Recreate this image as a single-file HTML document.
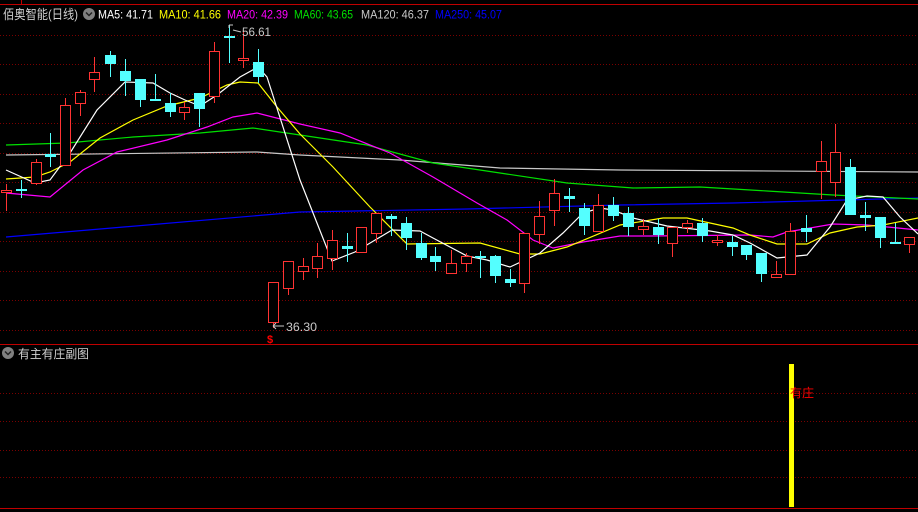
<!DOCTYPE html>
<html><head><meta charset="utf-8"><style>
html,body{margin:0;padding:0;background:#000;width:918px;height:512px;overflow:hidden}
svg{display:block;font-family:"Liberation Sans","Noto Sans CJK SC",sans-serif}
</style></head><body>
<svg id="s" width="918" height="512" viewBox="0 0 918 512" xmlns="http://www.w3.org/2000/svg">
<rect width="918" height="512" fill="#000"/>
<g id="grid" stroke="#7a0000" stroke-width="1" stroke-dasharray="1,2"></g>
<line x1="0" y1="4.5" x2="918" y2="4.5" stroke="#c00000"/>
<line x1="21.5" y1="0" x2="21.5" y2="4" stroke="#c00000"/>
<line x1="0" y1="344.5" x2="918" y2="344.5" stroke="#c00000"/>
<line x1="0" y1="508.5" x2="918" y2="508.5" stroke="#c00000"/>
<g fill="none" stroke-width="1.2">
<polyline stroke="#0000ff" points="6,237 300,212 467,209 620,205 733,203 918,198"/>
<polyline stroke="#c8c8c8" points="6,155 257,152 300,155 400,160 500,168 620,170 918,172"/>
<polyline stroke="#00e000" points="6,145 67,143 133,137 200,133 253,128 300,135 367,145 433,163 500,173 567,183 633,188 700,187 767,191 833,195 918,199"/>
<polyline stroke="#ff00ff" points="6,193 50,197 83,170 117,152 167,140 207,127 233,117 257,113 300,124 340,133 390,153 433,177 477,203 507,220 533,240 553,248 583,242 620,236 650,236 750,235 773,237 787,232 833,224 867,225 918,230"/>
<polyline stroke="#ffff00" points="6,179 35,177 50,172 70,162 100,138 133,120 167,106 200,98 227,85 240,82 258,83 277,107 300,134 333,167 370,207 407,244 480,243 520,254 540,254 567,247 620,225 663,218 687,218 710,223 733,228 750,235 777,244 807,244 830,233 857,227 883,225 918,218"/>
<polyline stroke="#ffffff" points="6,170 35,183 50,180 70,153 97,110 125,82 153,83 170,93 185,100 200,106 217,95 240,77 258,67 267,77 300,180 332,261 355,252 392,230 420,231 433,238 467,256 487,260 510,267 540,253 563,233 583,213 600,208 613,210 633,218 667,226 710,231 733,235 750,243 777,258 807,255 830,227 847,200 867,196 883,197 900,217 918,234"/>
</g>
<g id="c"></g>
<text x="3" y="19" fill="#d0d0d0" font-size="13" textLength="75" lengthAdjust="spacingAndGlyphs">佰奥智能(日线)</text>
<circle cx="89" cy="14" r="6" fill="#808080"/><path d="M86,12.5 L89,15.5 L92,12.5" stroke="#222" stroke-width="1.5" fill="none"/>
<g font-size="12">
<text x="98" y="18.5" fill="#ffffff" textLength="55" lengthAdjust="spacingAndGlyphs">MA5: 41.71</text>
<text x="159" y="18.5" fill="#ffff00" textLength="62" lengthAdjust="spacingAndGlyphs">MA10: 41.66</text>
<text x="227" y="18.5" fill="#ff00ff" textLength="61" lengthAdjust="spacingAndGlyphs">MA20: 42.39</text>
<text x="294" y="18.5" fill="#00e000" textLength="59" lengthAdjust="spacingAndGlyphs">MA60: 43.65</text>
<text x="361" y="18.5" fill="#c8c8c8" textLength="68" lengthAdjust="spacingAndGlyphs">MA120: 46.37</text>
<text x="435" y="18.5" fill="#0000ff" textLength="67" lengthAdjust="spacingAndGlyphs">MA250: 45.07</text>
<text x="242" y="36" fill="#c8c8c8" textLength="29" lengthAdjust="spacingAndGlyphs">56.61</text>
<text x="286" y="331" fill="#c8c8c8" textLength="31" lengthAdjust="spacingAndGlyphs">36.30</text>
</g>
<path d="M229,25 L229,28 M229,25 L233,25 M233,30 L241,32" stroke="#c8c8c8" fill="none"/>
<path d="M273,326 L284,326 M273,326 L276,323 M273,326 L276,329" stroke="#c8c8c8" fill="none"/>
<text x="267" y="343" fill="#ff0000" font-size="11" font-weight="bold">$</text>
<circle cx="8" cy="353" r="6" fill="#808080"/><path d="M5,351.5 L8,354.5 L11,351.5" stroke="#222" stroke-width="1.5" fill="none"/>
<text x="18" y="358" fill="#d0d0d0" font-size="12" textLength="71" lengthAdjust="spacingAndGlyphs">有主有庄副图</text>
<rect x="789" y="364" width="5" height="143" fill="#ffff00"/>
<text x="790" y="397" fill="#ff0000" font-size="12" textLength="24" lengthAdjust="spacingAndGlyphs">有庄</text>
</svg>
<script>
var g=document.getElementById('grid'),h='';
[35,64,94,123,153,182,212,241,271,300,330,393,421,450,477].forEach(function(y){h+='<line x1="0" y1="'+(y+.5)+'" x2="918" y2="'+(y+.5)+'"/>';});
g.innerHTML=h;
var C=[[6,'r',190,192,184,211],[21,'c',189,189,180,198],[36,'r',162,183,159,185],[50,'c',154,157,133,167],[65,'r',105,165,98,165],[80,'r',92,103,90,116],[94,'r',72,79,57,92],[110,'c',55,64,51,77],[125,'c',71,81,59,96],[140,'c',79,100,79,107],[155,'c',99,99,74,101],[170,'c',103,112,93,117],[184,'r',107,112,102,120],[199,'c',93,109,93,127],[214,'r',51,96,42,103],[229,'c',36,36,25,63],[243,'r',58,60,30,68],[258,'c',62,77,49,83],
[273,'r',282,322,282,328],[288,'r',261,288,261,295],[303,'r',266,271,258,280],[317,'r',256,268,243,278],[332,'r',240,258,230,270],[347,'c',246,249,233,262],[361,'r',227,252,227,252],[376,'r',213,233,213,243],[391,'c',216,219,214,236],[406,'c',223,238,217,250],[421,'c',243,258,233,260],[435,'c',256,262,247,271],[451,'r',263,273,250,273],[466,'r',256,263,253,272],[480,'c',256,256,251,278],[495,'c',256,276,255,283],[510,'c',279,283,269,287],[524,'r',233,283,233,293],[539,'r',216,234,201,244],[554,'r',193,210,179,226],[569,'c',196,199,188,212],[584,'c',208,226,203,235],[598,'r',205,231,194,231],[613,'c',205,216,197,221],[628,'c',213,227,207,236],[643,'r',226,229,219,235],[658,'c',227,235,219,244],[672,'r',227,243,227,257],[687,'r',223,227,220,233],[702,'c',223,236,218,242],[717,'r',240,242,235,246],[732,'c',242,247,236,256],[746,'c',245,255,245,260],[761,'c',253,274,253,282],[776,'r',274,277,261,277],[790,'r',231,274,223,274],[806,'c',228,232,215,242],[821,'r',161,171,141,199],[835,'r',152,182,124,197],[850,'c',167,215,159,215],[865,'c',215,218,202,231],[880,'c',217,238,217,248],[895,'c',242,242,223,243],[909,'r',237,244,237,253]];
var o='';
C.forEach(function(k){var x=k[0],t=k[2],b=k[3],hi=k[4],lo=k[5];
if(k[1]=='r'){o+='<line x1="'+(x+.5)+'" y1="'+hi+'" x2="'+(x+.5)+'" y2="'+t+'" stroke="#ff3333"/><line x1="'+(x+.5)+'" y1="'+b+'" x2="'+(x+.5)+'" y2="'+lo+'" stroke="#ff3333"/><rect x="'+(x-4.5)+'" y="'+(t+.5)+'" width="10" height="'+Math.max(b-t,1)+'" fill="#000" stroke="#ff3333"/>';}
else{o+='<line x1="'+(x+.5)+'" y1="'+hi+'" x2="'+(x+.5)+'" y2="'+lo+'" stroke="#54ffff"/><rect x="'+(x-5)+'" y="'+t+'" width="11" height="'+Math.max(b-t,2)+'" fill="#54ffff"/>';}});
document.getElementById('c').innerHTML=o;
</script>
</body></html>
